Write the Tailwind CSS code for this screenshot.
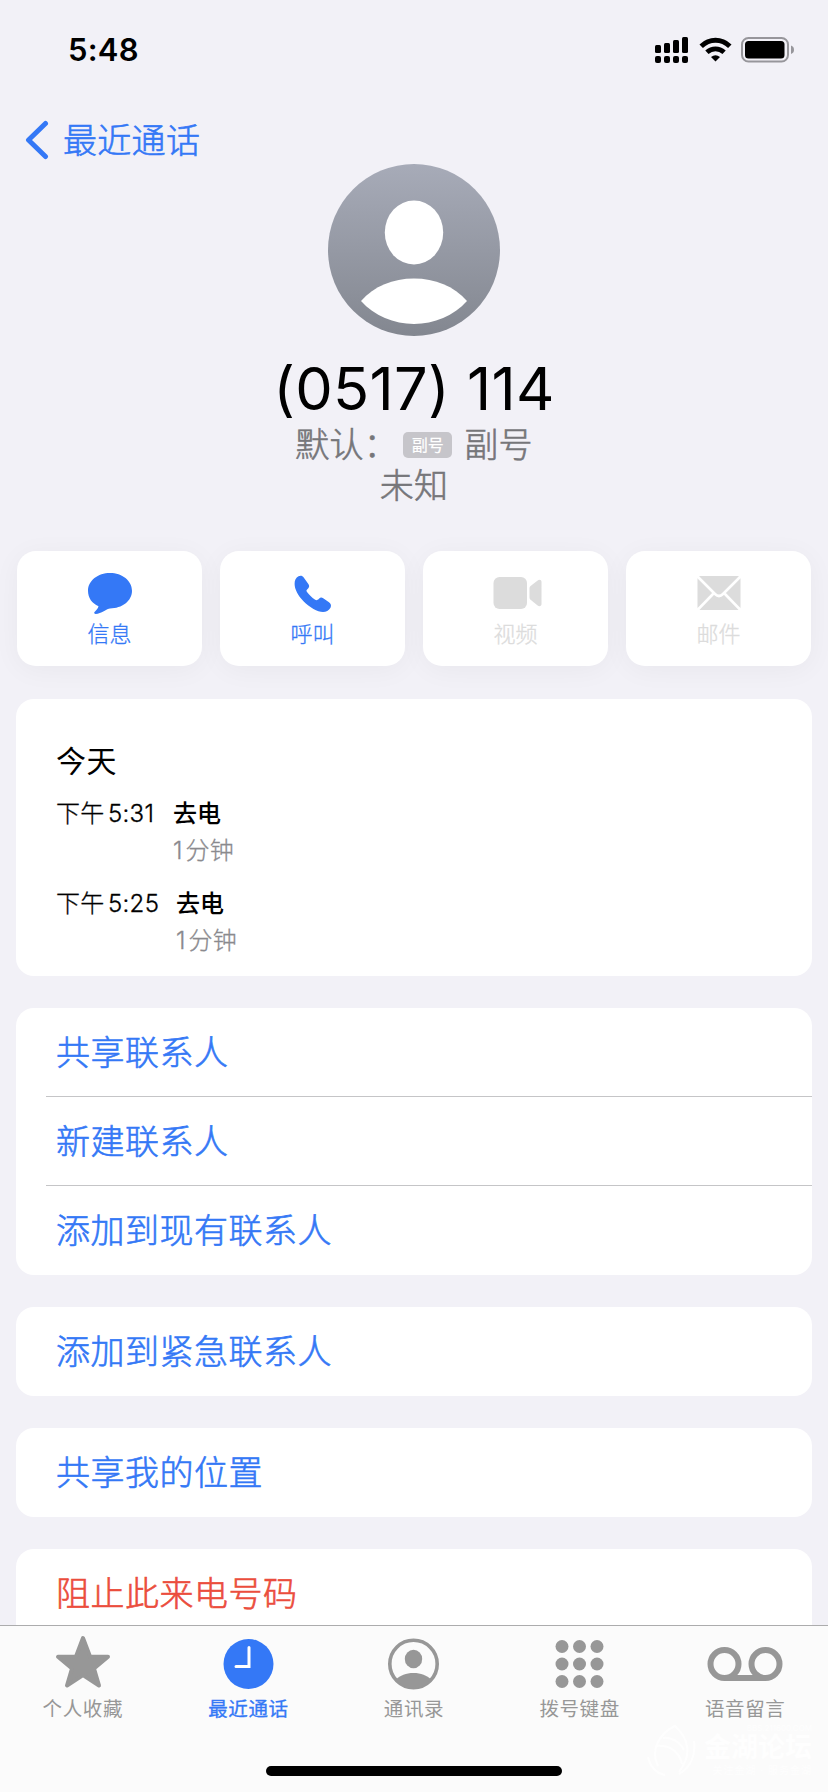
<!DOCTYPE html>
<html lang="zh-CN">
<head>
<meta charset="utf-8">
<title>最近通话</title>
<script src="https://cdn.jsdelivr.net/npm/@tailwindcss/browser@4"></script>
</head>
<body class="w-[828px] h-[1792px] overflow-hidden bg-[#f2f1f7] font-['Inter','Noto_Sans_CJK_SC',sans-serif] text-black">
<div class="flex flex-col w-[828px] h-[1792px] overflow-hidden">

  <!-- Status bar -->
  <header class="flex h-[99px] shrink-0 items-center pl-[68px] pr-[34px]">
    <span class="text-[31px] font-semibold leading-none tracking-[0.2px]">5:48</span>
    <div class="ml-auto flex items-center">
      <svg class="w-[33px] h-[26px] mr-[11px]" viewBox="0 0 33 26">
        <rect x="0" y="8" width="6" height="8" rx="1.5"/><rect x="9" y="6" width="6" height="10" rx="1.5"/><rect x="18" y="3" width="6" height="13" rx="1.5"/><rect x="27" y="0" width="6" height="16" rx="1.5"/>
        <rect x="0" y="19" width="6" height="7" rx="2"/><rect x="9" y="19" width="6" height="7" rx="2"/><rect x="18" y="19" width="6" height="7" rx="2"/><rect x="27" y="19" width="6" height="7" rx="2"/>
      </svg>
      <svg class="w-[33px] h-[26px] mr-[9px]" viewBox="0 0 33 26">
        <path d="M2.2 9.2C10.5 1.300 22.500 1.300 30.800 9.200" fill="none" stroke="#000" stroke-width="5"/>
        <path d="M7.900 15.300C13 10.600 20 10.600 25.100 15.300" fill="none" stroke="#000" stroke-width="4.800"/>
        <path d="M16.500 24.600L12 20Q16.500 16.400 21 20Z"/>
      </svg>
      <svg class="w-[53px] h-[26px]" viewBox="0 0 53 26">
        <rect x="1" y="1" width="46" height="23.500" rx="6.500" fill="none" stroke="#97969b" stroke-width="2"/>
        <rect x="4" y="4" width="39.500" height="17.500" rx="3.500"/>
        <path d="M50 8.500Q53 9.500 53 12.800T50 17Z" fill="#97969b"/>
      </svg>
    </div>
  </header>

  <!-- Back navigation -->
  <nav class="flex h-[65px] shrink-0 items-start pl-[25px] text-[#3478f6]">
    <svg class="mt-[21px] h-[40px] w-[25px]" viewBox="0 0 25 40"><path d="M20.500 3.500L3.500 20L20.500 36.500" fill="none" stroke="currentColor" stroke-width="5" stroke-linecap="round" stroke-linejoin="round"/></svg>
    <span class="ml-[13px] mt-[22px] text-[34px] font-light leading-[40px] tracking-[0.3px] [-webkit-text-stroke:0.6px_currentColor]">最近通话</span>
  </nav>

  <!-- Contact summary -->
  <section class="flex h-[387px] shrink-0 flex-col items-center">
    <svg class="h-[172px] w-[172px] shrink-0" viewBox="0 0 172 172">
      <defs><linearGradient id="avatar" x1="0" y1="0" x2="0" y2="1"><stop offset="0" stop-color="#a7abb8"/><stop offset="1" stop-color="#838790"/></linearGradient></defs>
      <circle cx="86" cy="86" r="86" fill="url(#avatar)"/>
      <ellipse cx="86" cy="68.500" rx="29.200" ry="32" fill="#fff"/>
      <path d="M33 137C46 122 65 114.500 86 114.500S126 122 139 137C126 151.500 106 160 86 160S46 151.500 33 137Z" fill="#fff"/>
    </svg>
    <h1 class="mt-[16px] h-[72px] whitespace-nowrap text-[59.5px] font-normal leading-[73px] tracking-[0.3px]">(0517) 114</h1>
    <p class="flex h-[41px] items-center text-[34px] font-light leading-[41px] tracking-[0.3px] text-[#76767a] [-webkit-text-stroke:0.6px_currentColor]">
      <span class="w-[108px]">默认：</span>
      <span class="flex h-[26px] w-[49px] items-center justify-center rounded-[5px] bg-[#c6c5ca] text-[16px] font-normal leading-none tracking-normal text-white [-webkit-text-stroke:0.2px_white]">副号</span>
      <span class="ml-[12px]">副号</span>
    </p>
    <p class="h-[41px] text-[34px] font-light leading-[41px] tracking-[0.3px] text-[#76767a] [-webkit-text-stroke:0.6px_currentColor]">未知</p>
  </section>

  <!-- Quick actions -->
  <section class="mx-[17px] grid h-[115px] shrink-0 grid-cols-4 gap-[18px] text-[22px] font-light leading-[32px] [-webkit-text-stroke:0.3px_currentColor]">
    <div class="flex flex-col items-center rounded-[19px] bg-white pt-[19px] text-[#3478f6] shadow-[0_4px_28px_rgba(0,0,0,0.045)] [-webkit-text-stroke-color:currentColor]">
      <svg class="h-[48px] w-[48px]" viewBox="0 0 48 48"><path fill="currentColor" d="M24 3C36 3 46 10.600 46 20.800S36 38.500 24 38.500C21 38.500 15 44 9.500 43.900C7.800 43.800 7.800 42.500 9 41.500C10.700 40 12 38 12.500 36.200C6 33.500 2 28 2 20.800C2 10.600 12 3 24 3Z"/></svg>
      <span>信息</span>
    </div>
    <div class="flex flex-col items-center rounded-[19px] bg-white pt-[19px] text-[#3478f6] shadow-[0_4px_28px_rgba(0,0,0,0.045)] [-webkit-text-stroke-color:currentColor]">
      <svg class="h-[48px] w-[48px]" viewBox="0 0 48 48"><path fill="currentColor" d="M9.500 6.300C11.500 5.400 13.500 5.700 14.700 7.400L19 13.500C20.300 15.300 20.700 16.500 19.300 18.200C17.300 20.300 17 20.400 18 22C20 24.700 23 27.700 25.800 29.500C27.400 30.600 28 30.600 30 28.800C31.300 27.300 32.600 27.200 34.200 28.200L40 32.300C42 33.700 42.500 35.500 41.500 37.700C40 40.500 37 42 34 42C28.500 42 20.500 37.300 14.500 31.200C9 25.500 5.700 19.500 5.600 14C5.500 10.500 6.900 7.500 9.500 6.300Z"/></svg>
      <span>呼叫</span>
    </div>
    <div class="flex flex-col items-center rounded-[19px] bg-white pt-[19px] text-[#dcdcdc] shadow-[0_4px_28px_rgba(0,0,0,0.045)] [-webkit-text-stroke-color:currentColor]">
      <svg class="h-[48px] w-[50px] overflow-visible" viewBox="0 0 50 48"><rect x="2.500" y="7" width="33.500" height="32" rx="6" fill="currentColor"/><path fill="currentColor" d="M38.500 18.500C38.500 17.300 38.800 16.700 39.600 16L46.300 10.700C48.500 9 50.500 10 50.500 12V34C50.500 36 48.500 37 46.300 35.300L39.600 29.800C38.800 29.100 38.500 28.500 38.500 27.300Z"/></svg>
      <span>视频</span>
    </div>
    <div class="flex flex-col items-center rounded-[19px] bg-white pt-[19px] text-[#dcdcdc] shadow-[0_4px_28px_rgba(0,0,0,0.045)] [-webkit-text-stroke-color:currentColor]">
      <svg class="h-[48px] w-[48px]" viewBox="0 0 48 48"><rect x="2.500" y="6" width="43" height="34" rx="3" fill="currentColor"/><path d="M2 6L20 24Q24 28 28 24L46 6M2 40.500L18.500 23.500M46 40.500L29.500 23.500" fill="none" stroke="#fff" stroke-width="2.600"/></svg>
      <span>邮件</span>
    </div>
  </section>

  <!-- Call history -->
  <section class="mx-[16px] mt-[33px] flex h-[277px] shrink-0 flex-col rounded-[18px] bg-white pl-[40px] pt-[42px]">
    <h2 class="h-[40px] text-[30px] font-normal leading-[40px] tracking-[0.5px]">今天</h2>
    <div class="mt-[14px] flex text-[24px] font-light leading-[37px] [-webkit-text-stroke:0.3px_currentColor]">
      <div class="flex w-[117px]"><span class="w-[52px] tracking-[0.3px]">下午</span><span class="tracking-[0.3px]">5:31</span></div>
      <div><div class="font-medium [-webkit-text-stroke:0px]">去电</div><div class="text-[#8a8a8e] [-webkit-text-stroke:0.3px_currentColor]"><span class="mr-[3px]">1</span><span class="tracking-[0.4px]">分钟</span></div></div>
    </div>
    <div class="mt-[16px] flex text-[24px] font-light leading-[37px] [-webkit-text-stroke:0.3px_currentColor]">
      <div class="flex w-[120px]"><span class="w-[52px] tracking-[0.3px]">下午</span><span class="tracking-[0.3px]">5:25</span></div>
      <div><div class="font-medium [-webkit-text-stroke:0px]">去电</div><div class="text-[#8a8a8e] [-webkit-text-stroke:0.3px_currentColor]"><span class="mr-[3px]">1</span><span class="tracking-[0.4px]">分钟</span></div></div>
    </div>
  </section>

  <!-- Contact actions -->
  <section class="mx-[16px] mt-[32px] flex h-[267px] shrink-0 flex-col rounded-[18px] bg-white pl-[30px] text-[34px] font-light leading-[90px] tracking-[0.5px] text-[#3478f6] [-webkit-text-stroke:0.6px_currentColor]">
    <div class="h-[89px] border-b border-[#c5c5c7] pl-[10px]">共享联系人</div>
    <div class="h-[89px] border-b border-[#c5c5c7] pl-[10px]">新建联系人</div>
    <div class="h-[89px] pl-[10px]">添加到现有联系人</div>
  </section>
  <section class="mx-[16px] mt-[32px] h-[89px] shrink-0 rounded-[18px] bg-white pl-[40px] text-[34px] font-light leading-[90px] tracking-[0.5px] text-[#3478f6] [-webkit-text-stroke:0.6px_currentColor]">添加到紧急联系人</section>
  <section class="mx-[16px] mt-[32px] h-[89px] shrink-0 rounded-[18px] bg-white pl-[40px] text-[34px] font-light leading-[90px] tracking-[0.5px] text-[#3478f6] [-webkit-text-stroke:0.6px_currentColor]">共享我的位置</section>
  <section class="mx-[16px] mt-[32px] h-[76px] shrink-0 rounded-t-[18px] bg-white pl-[40px] text-[34px] font-light leading-[90px] tracking-[0.5px] text-[#eb4d3d] [-webkit-text-stroke:0.6px_currentColor]">阻止此来电号码</section>

  <!-- Tab bar -->
  <footer class="relative h-[167px] shrink-0 border-t border-[#acacad] bg-[#fbfbfb]">
    <div class="grid grid-cols-5 pt-[8px] text-[19.500px] font-normal leading-[31px] tracking-[0.6px] text-[#979797]">
      <div class="flex flex-col items-center">
        <svg class="h-[60px] w-[80px]" viewBox="0 0 80 60"><path d="M40 4L47 22.500L65 22.700L51 34.500L56 51.500L40 41L24 51.500L29 34.500L15 22.700L33 22.500Z" fill="currentColor" stroke="currentColor" stroke-width="4" stroke-linejoin="round"/></svg>
        <span>个人收藏</span>
      </div>
      <div class="flex flex-col items-center text-[#3478f6]">
        <svg class="h-[60px] w-[80px]" viewBox="0 0 80 60"><circle cx="40.500" cy="30" r="25" fill="currentColor"/><path d="M41 13.500V32.500H28" fill="none" stroke="#fff" stroke-width="3" stroke-linecap="round"/></svg>
        <span class="[-webkit-text-stroke:0.3px_currentColor]">最近通话</span>
      </div>
      <div class="flex flex-col items-center">
        <svg class="h-[60px] w-[80px]" viewBox="0 0 80 60"><circle cx="39.500" cy="30" r="23.700" fill="none" stroke="currentColor" stroke-width="3.600"/><ellipse cx="39.500" cy="25" rx="8.700" ry="9.300" fill="currentColor"/><path d="M22 45.500C26 41.500 32 39 39.500 39S53 41.500 57 45.500C52.500 51.500 46 54 39.500 54S26.500 51.500 22 45.500Z" fill="currentColor"/></svg>
        <span>通讯录</span>
      </div>
      <div class="flex flex-col items-center">
        <svg class="h-[60px] w-[80px]" viewBox="0 0 80 60" fill="currentColor"><circle cx="22" cy="12.500" r="6.500"/><circle cx="39.500" cy="12.500" r="6.500"/><circle cx="57" cy="12.500" r="6.500"/><circle cx="22" cy="30" r="6.500"/><circle cx="39.500" cy="30" r="6.500"/><circle cx="57" cy="30" r="6.500"/><circle cx="22" cy="47.500" r="6.500"/><circle cx="39.500" cy="47.500" r="6.500"/><circle cx="57" cy="47.500" r="6.500"/></svg>
        <span>拨号键盘</span>
      </div>
      <div class="flex flex-col items-center">
        <svg class="h-[60px] w-[80px]" viewBox="0 0 80 60" fill="none" stroke="currentColor" stroke-width="6"><circle cx="19.500" cy="30" r="14"/><circle cx="60.500" cy="30" r="14"/><path d="M19.500 44H60.500"/></svg>
        <span>语音留言</span>
      </div>
    </div>
    <!-- Watermark -->
    <div class="absolute right-[16px] top-[98px] flex items-center gap-[8px] text-[#fefefe]">
      <svg class="h-[52px] w-[50px]" viewBox="0 0 50 52" fill="none" stroke="currentColor" stroke-width="2"><path d="M12 42C3 24 16 8 29 2C42 14 47 30 33 48M2 33C4 42 10 49 19 51M48 17C50 32 44 44 33 50M10 22C22 21 33 26 36 40M17 14C26 13 34 18 38 26"/></svg>
      <div class="flex flex-col items-end"><span class="text-[8px] leading-[8px]">BBS.211600.COM</span><span class="text-[27px] font-bold leading-[32px]">金湖论坛</span><span class="text-[10px] leading-[12px] tracking-[1px]">关注金湖 · 服务金湖</span></div>
    </div>
    <div class="absolute left-[266px] top-[140px] h-[10px] w-[296px] rounded-full bg-black"></div>
  </footer>
</div>
</body>
</html>
